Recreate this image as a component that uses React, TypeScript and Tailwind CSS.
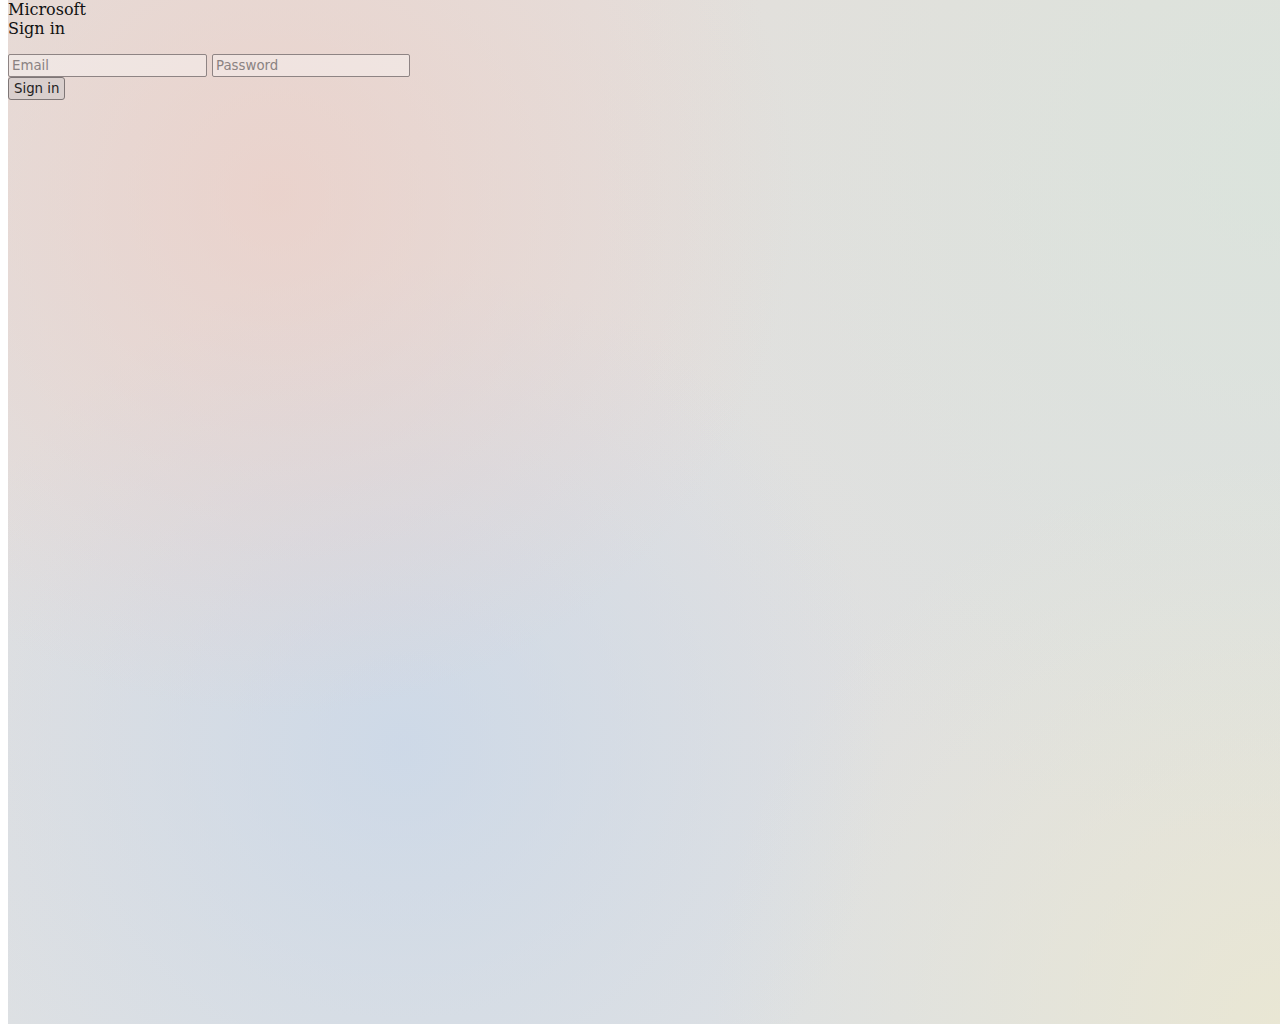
export default function App() {
  return (
    <div className="min-h-screen ml-2 bg-[radial-gradient(circle_at_21%_19%,rgba(240,200,190,0.55),transparent_40%),radial-gradient(circle_at_31%_73%,rgba(198,214,234,0.7),transparent_42%),radial-gradient(circle_at_100%_15%,rgba(214,230,220,0.6),transparent_45%),radial-gradient(circle_at_100%_100%,rgba(236,232,208,0.8),transparent_35%),linear-gradient(#e4dfdc,#dde0e3)] font-['DejaVu_Serif',serif] text-[#111]">
      <div className="text-base leading-[19px]">Microsoft</div>
      <div className="text-base leading-[19px] mb-4">Sign in</div>
      <form onSubmit={(e) => e.preventDefault()} className="font-['DejaVu_Sans',sans-serif] text-[13.333px]">
        <div className="flex gap-[5px]">
          <input
            type="email"
            placeholder="Email"
            className="w-[199px] h-[23px] px-[3px] border border-[#8e8484] rounded-[2px] bg-white/35 placeholder:text-[#8a8282] outline-none"
          />
          <input
            type="password"
            placeholder="Password"
            className="w-[198px] h-[23px] px-[3px] border border-[#8e8484] rounded-[2px] bg-white/35 placeholder:text-[#8a8282] outline-none"
          />
        </div>
        <button
          type="submit"
          className="h-[23px] px-[5px] border border-[#7e7676] rounded-[3px] bg-[#d9cfcd] text-[#222]"
        >
          Sign in
        </button>
      </form>
    </div>
  )
}
